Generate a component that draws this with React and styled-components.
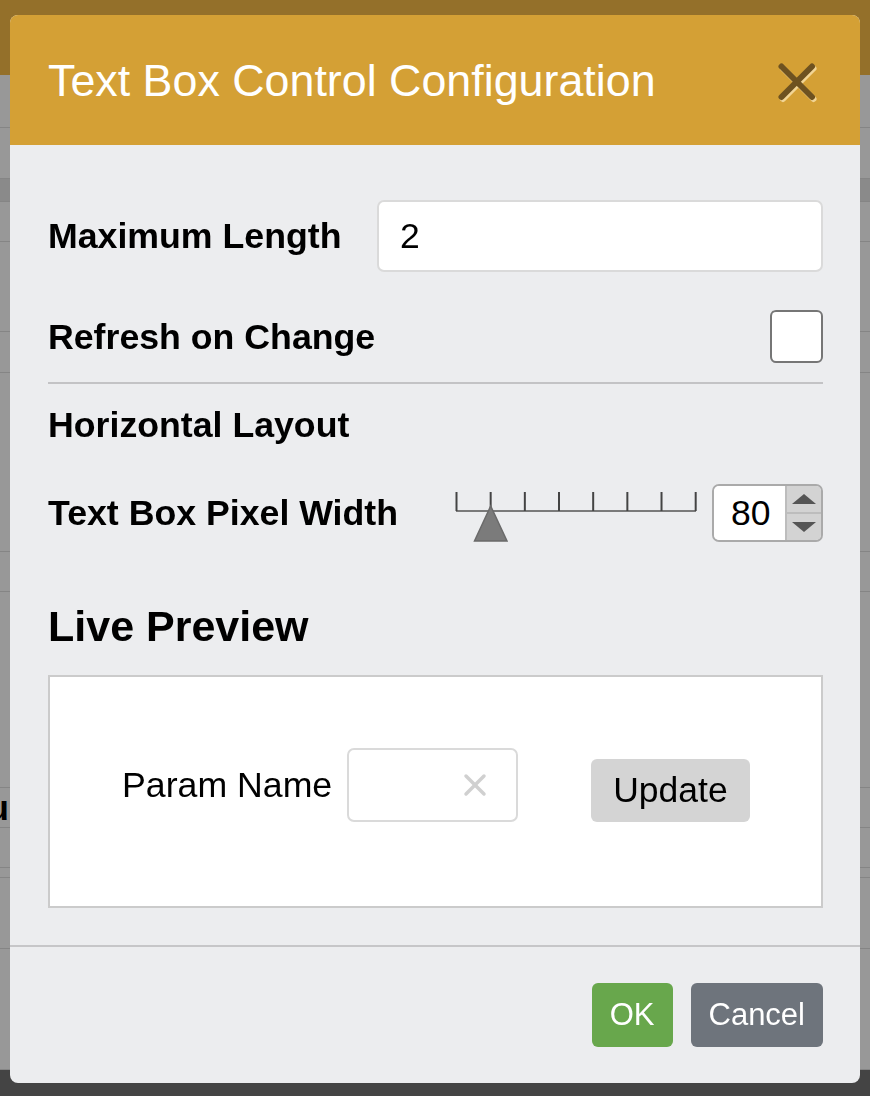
import React from 'react';
import styled, { createGlobalStyle } from 'styled-components';

const GlobalStyle = createGlobalStyle`
  html, body {
    margin: 0;
    padding: 0;
    height: 100%;
    overflow: hidden;
  }
  body {
    font-family: "Liberation Sans", Arial, sans-serif;
  }
  * {
    box-sizing: border-box;
  }
`;

/* page behind the dialog */
const Page = styled.div`
  height: 100vh;
  display: flex;
  flex-direction: column;
  background: #959595;
`;

const TopBar = styled.div`
  height: 75px;
  flex: none;
  background: #94702a;
`;

const Rows = styled.div`
  flex: 1;
  display: flex;
  flex-direction: column;
`;

const BgRow = styled.div`
  height: ${(p) => p.$h}px;
  flex: ${(p) => (p.$fill ? 1 : 'none')};
  display: flex;
  align-items: center;
  background: ${(p) => (p.$dark ? '#8a8a8a' : '#989898')};
  border-bottom: 1px solid #858585;
`;

const BgLabel = styled.div`
  width: 9px;
  overflow: hidden;
  display: flex;
  justify-content: flex-end;
  white-space: nowrap;
  font-size: 35px;
  font-weight: 700;
  color: #000;
`;

const BottomBar = styled.div`
  height: 26px;
  flex: none;
  background: #444;
`;

/* dialog */
const Modal = styled.div`
  position: fixed;
  top: 15px;
  left: 10px;
  width: 850px;
  height: 1068px;
  background: #ecedef;
  border-radius: 8px;
  overflow: hidden;
  display: flex;
  flex-direction: column;
`;

const Header = styled.div`
  height: 130px;
  flex: none;
  background: #d4a035;
  display: flex;
  align-items: center;
  justify-content: space-between;
  padding: 0 41px 0 38px;
`;

const Title = styled.h1`
  margin: 0;
  font-size: 44.8px;
  font-weight: 400;
  line-height: 1;
  color: #fff;
`;

const CloseButton = styled.button`
  border: none;
  background: none;
  padding: 0;
  margin-top: 6px;
  width: 41px;
  height: 41px;
  cursor: pointer;

  svg {
    display: block;
  }
`;

const Body = styled.div`
  flex: 1;
  display: flex;
  flex-direction: column;
  padding: 55px 37px 0 38px;
`;

const FieldRow = styled.div`
  height: ${(p) => p.$h}px;
  margin-top: ${(p) => p.$top || 0}px;
  display: flex;
  align-items: center;
  justify-content: space-between;
`;

const Label = styled.label`
  font-size: 35.7px;
  font-weight: 700;
  line-height: 40px;
  color: #000;
`;

const SectionLabel = styled(Label)`
  display: block;
  margin-top: 21px;
`;

const TextInput = styled.div`
  width: 446px;
  height: 72px;
  background: #fff;
  border: 2px solid #dadada;
  border-radius: 7px;
  display: flex;
  align-items: center;
  padding-left: 21px;
  font-size: 35.5px;
  color: #000;
`;

const Checkbox = styled.div`
  width: 53px;
  height: 53px;
  background: #fff;
  border: 2px solid #767676;
  border-radius: 6px;
`;

const Divider = styled.div`
  height: 2px;
  margin-top: 19px;
  background: #c3c3c5;
`;

const SliderGroup = styled.div`
  display: flex;
  align-items: center;
  gap: 15px;

  > svg {
    display: block;
  }
`;

const Spinner = styled.div`
  width: 111px;
  height: 58px;
  border: 2px solid #aaa;
  border-radius: 7px;
  overflow: hidden;
  display: flex;
`;

const SpinValue = styled.div`
  flex: 1;
  background: #fff;
  display: flex;
  align-items: center;
  padding-left: 17px;
  font-size: 35.5px;
  color: #000;
`;

const SpinButtons = styled.div`
  width: 36px;
  display: flex;
  flex-direction: column;
  border-left: 2px solid #bdbdbd;
  background: #d3d3d3;
`;

const SpinButton = styled.div`
  flex: 1;
  display: flex;
  align-items: center;
  justify-content: center;
  border-top: ${(p) => (p.$down ? '2px solid #bdbdbd' : 'none')};
`;

const PreviewTitle = styled.h2`
  margin: 60px 0 0;
  font-size: 43px;
  font-weight: 700;
  line-height: 48px;
  color: #000;
`;

const PreviewBox = styled.div`
  margin-top: 25px;
  height: 233px;
  background: #fff;
  border: 2px solid #cbcbcb;
  padding: 71px 0 0 72px;
`;

const PreviewRow = styled.div`
  display: flex;
  align-items: flex-end;
`;

const ParamField = styled.div`
  display: flex;
  align-items: center;
  gap: 15px;
`;

const ParamLabel = styled.span`
  font-size: 35.7px;
  color: #000;
`;

const ClearInput = styled.div`
  width: 171px;
  height: 74px;
  border: 2px solid #dadada;
  border-radius: 7px;
  background: #fff;
  display: flex;
  align-items: center;
  justify-content: flex-end;
  padding-right: 29px;
`;

const UpdateButton = styled.button`
  margin-left: 73px;
  height: 63px;
  padding: 0 22px;
  border: none;
  border-radius: 6px;
  background: #d4d4d4;
  font-family: inherit;
  font-size: 35.5px;
  color: #000;
`;

const Footer = styled.div`
  flex: none;
  border-top: 2px solid #c6c6c8;
  padding: 36px 37px;
  display: flex;
  justify-content: flex-end;
  gap: 18px;
`;

const ActionButton = styled.button`
  height: 64px;
  padding: 0 18px;
  border: none;
  border-radius: 6px;
  background: ${(p) => (p.$primary ? '#68a74c' : '#6e747c')};
  color: #fff;
  font-family: inherit;
  font-size: 31px;
`;

const bgRows = [
  { h: 53 },
  { h: 51 },
  { h: 23, dark: true },
  { h: 40 },
  { h: 90 },
  { h: 41 },
  { h: 179 },
  { h: 40 },
  { h: 196 },
  { h: 40, label: 'Menu' },
  { h: 40 },
  { h: 10 },
  { h: 71 },
  { h: 100, fill: true },
];

const CloseIcon = () => (
  <svg width="41" height="41" viewBox="0 0 41 41">
    <g stroke="#f2d595" strokeWidth="6" strokeLinecap="round" transform="translate(1.5 2)">
      <line x1="3.5" y1="3.5" x2="34" y2="34" />
      <line x1="34" y1="3.5" x2="3.5" y2="34" />
    </g>
    <g stroke="#6e5220" strokeWidth="6" strokeLinecap="round">
      <line x1="3.5" y1="3.5" x2="34" y2="34" />
      <line x1="34" y1="3.5" x2="3.5" y2="34" />
    </g>
  </svg>
);

const Slider = () => {
  const ticks = Array.from({ length: 8 }, (_, i) => 1.5 + i * 34.17);
  return (
    <svg width="242" height="58" viewBox="0 0 242 58">
      <line x1="1" y1="27" x2="241" y2="27" stroke="#7a7a7a" strokeWidth="2" />
      {ticks.map((x) => (
        <line key={x} x1={x} y1="8" x2={x} y2="27" stroke="#444" strokeWidth="2" />
      ))}
      <polygon points="35.7,22 52,57 19.5,57" fill="#7b7b7b" stroke="#6a6a6a" strokeWidth="1.5" />
    </svg>
  );
};

const Arrow = ({ down }) => (
  <svg width="24" height="10" viewBox="0 0 24 10">
    <polygon points={down ? '0,0 24,0 12,10' : '12,0 24,10 0,10'} fill="#555" />
  </svg>
);

const ClearIcon = () => (
  <svg width="24" height="24" viewBox="0 0 24 24">
    <g stroke="#d0d0d0" strokeWidth="3.5" strokeLinecap="round">
      <line x1="3" y1="3" x2="21" y2="21" />
      <line x1="21" y1="3" x2="3" y2="21" />
    </g>
  </svg>
);

const App = () => (
  <>
    <GlobalStyle />
    <Page>
      <TopBar />
      <Rows>
        {bgRows.map((r, i) => (
          <BgRow key={i} $h={r.h} $dark={r.dark} $fill={r.fill}>
            {r.label && <BgLabel>{r.label}</BgLabel>}
          </BgRow>
        ))}
      </Rows>
      <BottomBar />
    </Page>

    <Modal>
      <Header>
        <Title>Text Box Control Configuration</Title>
        <CloseButton aria-label="Close">
          <CloseIcon />
        </CloseButton>
      </Header>

      <Body>
        <FieldRow $h={72}>
          <Label>Maximum Length</Label>
          <TextInput>2</TextInput>
        </FieldRow>
        <FieldRow $h={53} $top={38}>
          <Label>Refresh on Change</Label>
          <Checkbox />
        </FieldRow>
        <Divider />
        <SectionLabel>Horizontal Layout</SectionLabel>
        <FieldRow $h={58} $top={39}>
          <Label>Text Box Pixel Width</Label>
          <SliderGroup>
            <Slider />
            <Spinner>
              <SpinValue>80</SpinValue>
              <SpinButtons>
                <SpinButton>
                  <Arrow />
                </SpinButton>
                <SpinButton $down>
                  <Arrow down />
                </SpinButton>
              </SpinButtons>
            </Spinner>
          </SliderGroup>
        </FieldRow>

        <PreviewTitle>Live Preview</PreviewTitle>
        <PreviewBox>
          <PreviewRow>
            <ParamField>
              <ParamLabel>Param Name</ParamLabel>
              <ClearInput>
                <ClearIcon />
              </ClearInput>
            </ParamField>
            <UpdateButton>Update</UpdateButton>
          </PreviewRow>
        </PreviewBox>
      </Body>

      <Footer>
        <ActionButton $primary>OK</ActionButton>
        <ActionButton>Cancel</ActionButton>
      </Footer>
    </Modal>
  </>
);

export default App;
